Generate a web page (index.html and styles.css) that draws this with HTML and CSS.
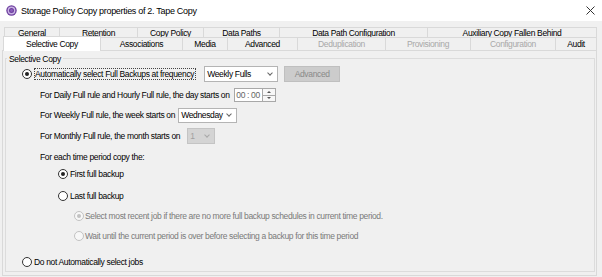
FILE: index.html
```html
<!DOCTYPE html>
<html lang="en">
<head>
    <meta charset="UTF-8">
    <title>Storage Policy Copy properties of 2. Tape Copy</title>
    <link rel="stylesheet" href="styles.css">
</head>
<body>
    <div class="dialog">
        <div class="titlebar">
            <svg class="app-icon" width="11" height="11" viewBox="0 0 11 11">
                <circle cx="5.5" cy="5.5" r="5.2" fill="#6c3d9e"/>
                <circle cx="5.5" cy="5.5" r="3.2" fill="none" stroke="#c9b3e3" stroke-width="1.4"/>
                <circle cx="5.5" cy="5.5" r="1.4" fill="#8a5dbb"/>
            </svg>
            <span class="title">Storage Policy Copy properties of 2. Tape Copy</span>
            <svg class="close" width="9" height="9" viewBox="0 0 9 9">
                <path d="M0.5 0.5 L8.5 8.5 M8.5 0.5 L0.5 8.5" stroke="#333" stroke-width="1"/>
            </svg>
        </div>

        <div class="tabs">
            <div class="tab-row row-back">
                <div class="tab first">General</div>
                <div class="tab">Retention</div>
                <div class="tab">Copy Policy</div>
                <div class="tab">Data Paths</div>
                <div class="tab">Data Path Configuration</div>
                <div class="tab">Auxiliary Copy Fallen Behind</div>
            </div>
            <div class="tab-row row-front">
                <div class="tab first active">Selective Copy</div>
                <div class="tab">Associations</div>
                <div class="tab">Media</div>
                <div class="tab">Advanced</div>
                <div class="tab disabled">Deduplication</div>
                <div class="tab disabled">Provisioning</div>
                <div class="tab disabled">Configuration</div>
                <div class="tab">Audit</div>
            </div>
        </div>

        <div class="panel">
            <fieldset class="group">
                <legend>Selective Copy</legend>
                <div class="group-body">
                    <div class="row">
                        <span class="radio on"></span>
                        <span class="focus">Automatically select Full Backups at frequency</span>
                        <div class="combo combo-frequency"><span>Weekly Fulls</span><span class="chev"></span></div>
                        <div class="btn">Advanced</div>
                    </div>
                    <div class="row indent-1 row-spaced">
                        <span>For Daily Full rule and Hourly Full rule, the day starts on</span>
                        <div class="time">
                            <div class="time-field">00 : 00</div>
                            <div class="spin">
                                <span class="spin-up"></span>
                                <span class="spin-down"></span>
                            </div>
                        </div>
                    </div>
                    <div class="row indent-1">
                        <span>For Weekly Full rule, the week starts on</span>
                        <div class="combo combo-week"><span>Wednesday</span><span class="chev"></span></div>
                    </div>
                    <div class="row indent-1 row-spaced">
                        <span>For Monthly Full rule, the month starts on</span>
                        <div class="combo combo-month disabled"><span>1</span><span class="chev"></span></div>
                    </div>
                    <div class="row indent-1 row-spaced">
                        <span>For each time period copy the:</span>
                    </div>
                    <div class="row indent-2 row-close">
                        <span class="radio on"></span>
                        <span>First full backup</span>
                    </div>
                    <div class="row indent-2 row-gap">
                        <span class="radio"></span>
                        <span>Last full backup</span>
                    </div>
                    <div class="row indent-3 muted">
                        <span class="radio on disabled"></span>
                        <span>Select most recent job if there are no more full backup schedules in current time period.</span>
                    </div>
                    <div class="row indent-3 muted">
                        <span class="radio disabled"></span>
                        <span>Wait until the current period is over before selecting a backup for this time period</span>
                    </div>
                    <div class="row row-last">
                        <span class="radio"></span>
                        <span>Do not Automatically select jobs</span>
                    </div>
                </div>
            </fieldset>
        </div>
    </div>
</body>
</html>
```

FILE: styles.css
```css
* {
    box-sizing: border-box;
}

body {
    margin: 0;
    background: #f0f0f0;
    font-family: 'Liberation Sans', Arial, sans-serif;
    font-size: 8.5px;
    letter-spacing: -0.35px;
    color: #000;
}

.dialog {
    width: 602px;
    height: 277px;
    overflow: hidden;
}

/* title bar */
.titlebar {
    height: 21px;
    background: #fff;
    display: flex;
    align-items: center;
    padding: 0 6px 0 6px;
}

.app-icon {
    margin-right: 4px;
    flex-shrink: 0;
}

.title {
    flex: 1;
    font-size: 9px;
    letter-spacing: -0.3px;
}

.close {
    margin-right: 1px;
}

/* tabs */
.tabs {
    margin: 6px 5px 0 4px;
}

.tab-row {
    display: grid;
}

.row-back {
    grid-template-columns: 56px 78px 66px 76px 148px 169px;
    height: 10px;
}

.row-front {
    grid-template-columns: 97px 82px 45px 70px 88px 85px 85px 41px;
    height: 13px;
}

.tab {
    display: flex;
    align-items: center;
    justify-content: center;
    line-height: 10px;
    background: #f0f0f0;
    border-top: 1px solid #d9d9d9;
    border-right: 1px solid #d9d9d9;
    white-space: nowrap;
}

.tab.first {
    border-left: 1px solid #d9d9d9;
}

.tab.active {
    background: #fff;
    margin: -1px 0 -1px -1px;
    position: relative;
    z-index: 1;
}

.tab.disabled {
    color: #a8a8a8;
}

/* panel */
.panel {
    height: 226px;
    margin: 0 5px 0 2px;
    border: 1px solid #d9d9d9;
    padding: 2px 1px 3px 2px;
}

.group {
    margin: 0;
    padding: 0;
    height: 100%;
    border: 1px solid #dcdcdc;
}

.group legend {
    margin-left: 1px;
    padding: 1px 2px 0;
    line-height: 10px;
}

.group-body {
    padding: 2px 0 0 16px;
    display: flex;
    flex-direction: column;
    gap: 4px;
}

.row {
    display: flex;
    align-items: center;
    height: 16px;
    white-space: nowrap;
}

.row-spaced {
    margin-top: 1px;
}

.row-close {
    margin-top: -3px;
}

.row-gap {
    margin-top: 2px;
}

.row-last {
    margin-top: 6px;
}

.indent-1 {
    padding-left: 18px;
}

.indent-2 {
    padding-left: 36px;
}

.indent-3 {
    padding-left: 52px;
}

.muted {
    color: #7a7a7a;
}

/* radio buttons */
.radio {
    width: 10px;
    height: 10px;
    border: 1px solid #333;
    border-radius: 50%;
    background: #fff;
    display: flex;
    align-items: center;
    justify-content: center;
    margin-right: 2px;
    flex-shrink: 0;
}

.radio.on::after {
    content: "";
    width: 4px;
    height: 4px;
    border-radius: 50%;
    background: #222;
}

.radio.disabled {
    border-color: #c2c2c2;
    background: #f7f7f7;
    margin-right: 1px;
}

.radio.disabled.on::after {
    background: #c2c2c2;
}

.focus {
    border: 1px dotted #444;
    line-height: 10px;
    padding: 0 1px 0 0;
}

/* combo boxes */
.combo {
    display: flex;
    align-items: center;
    justify-content: space-between;
    height: 16px;
    background: #fff;
    border: 1px solid #b4b4b4;
    padding: 0 5px 0 2px;
}

.combo-frequency {
    width: 74px;
    margin-left: 8px;
}

.combo-week {
    width: 59px;
    height: 15px;
    margin-left: 3px;
}

.combo-month {
    width: 28px;
    margin-left: 7px;
}

.combo.disabled {
    background: #d4d4d4;
    border-color: #c4c4c4;
    color: #a0a0a0;
}

.chev {
    width: 4px;
    height: 4px;
    border-right: 1px solid #666;
    border-bottom: 1px solid #666;
    transform: rotate(45deg);
    margin-top: -3px;
}

.combo.disabled .chev {
    border-color: #a8a8a8;
}

.btn {
    width: 56px;
    height: 16px;
    margin-left: 6px;
    background: #cccccc;
    border: 1px solid #bfbfbf;
    color: #8a8a8a;
    display: flex;
    align-items: center;
    justify-content: center;
}

/* time spinner */
.time {
    display: flex;
    margin-left: 4px;
}

.time-field {
    width: 29px;
    height: 14px;
    border: 1px solid #a8a8a8;
    background: #fff;
    color: #666;
    display: flex;
    align-items: center;
    justify-content: center;
}

.spin {
    width: 13px;
    height: 14px;
    border: 1px solid #a8a8a8;
    border-left: none;
    display: flex;
    flex-direction: column;
    background: #f7f7f7;
}

.spin-up,
.spin-down {
    flex: 1;
    display: flex;
    align-items: center;
    justify-content: center;
}

.spin-up {
    border-bottom: 1px solid #a8a8a8;
}

.spin-up::after {
    content: "";
    border-left: 2px solid transparent;
    border-right: 2px solid transparent;
    border-bottom: 2px solid #555;
}

.spin-down::after {
    content: "";
    border-left: 2px solid transparent;
    border-right: 2px solid transparent;
    border-top: 2px solid #555;
}
```
